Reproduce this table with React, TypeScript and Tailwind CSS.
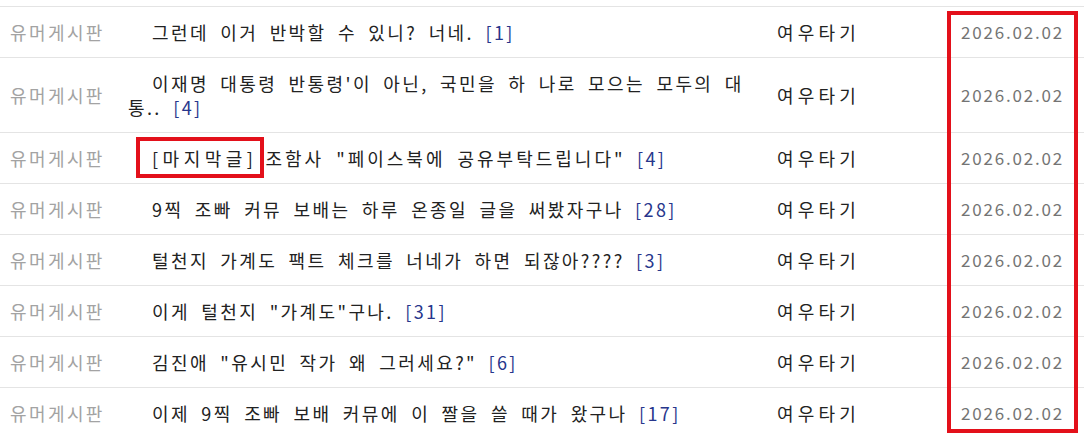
const rows: { title: React.ReactNode; count: number }[] = [
  { title: "그런데 이거 반박할 수 있니? 너네.", count: 1 },
  {
    title: (
      <>
        이재명 대통령 반통령'이 아닌, 국민을 하 나로 모으는 모두의 대
        <br />
        통..
      </>
    ),
    count: 4,
  },
  {
    title: (
      <>
        <span className="relative tracking-[4.5px]">
          [마지막글]
          <span className="absolute -left-[16px] -right-[7px] -top-[8px] -bottom-[7px] border-[4px] border-[#e3101a]" />
        </span>
        <span className="ml-[8px] tracking-[3px]">조함사 "페이스북에 공유부탁드립니다"</span>
      </>
    ),
    count: 4,
  },
  { title: "9찍 조빠 커뮤 보배는 하루 온종일 글을 써봤자구나", count: 28 },
  { title: "털천지 가계도 팩트 체크를 너네가 하면 되잖아????", count: 3 },
  { title: '이게 털천지 "가계도"구나.', count: 31 },
  { title: '김진애 "유시민 작가 왜 그러세요?"', count: 6 },
  { title: "이제 9찍 조빠 보배 커뮤에 이 짤을 쓸 때가 왔구나", count: 17 },
];

export default function App() {
  return (
    <div
      className="w-[1084px] h-[437px] overflow-hidden bg-white pt-[6px] text-[18px] tracking-[2.4px] [word-spacing:5px]"
      style={{ fontFamily: '"Noto Sans CJK KR", "Noto Sans", sans-serif' }}
    >
      <div className="relative border-t border-[#e4e4e4]">
        {rows.map((row, i) => (
          <div
            key={i}
            className="grid grid-cols-[128px_649px_170px_137px] items-center border-b border-[#e4e4e4] leading-[24px]"
          >
            <div className="pl-[10px] text-[#a3a3a3]">유머게시판</div>
            <div className="py-[13px] indent-[24px] whitespace-nowrap text-[#222]">
              {row.title} <span className="text-[#27368c]">[{row.count}]</span>
            </div>
            <div className="tracking-[4.2px] text-[#222]">여우타기</div>
            <div className="pl-[14px] text-[17px] tracking-[1.8px] text-[#747474]">2026.02.02</div>
          </div>
        ))}
        <div className="absolute left-[947px] top-[4px] w-[131px] h-[422px] border-[4px] border-[#e3101a]" />
      </div>
    </div>
  );
}
